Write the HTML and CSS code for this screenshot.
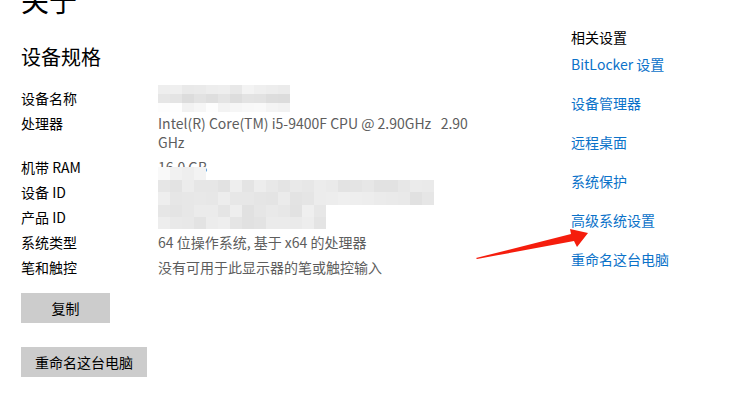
FILE: index.html
```html
<!DOCTYPE html>
<html lang="zh-CN">
<head>
  <meta charset="UTF-8">
  <meta name="viewport" content="width=device-width, initial-scale=1.0">
  <title>关于</title>
  <link rel="stylesheet" href="styles.css">
</head>
<body>
  <div class="page">
    <main class="about">
      <h1>关于</h1>
      <h2>设备规格</h2>
      <dl class="specs" id="specs">
        <div class="spec"><dt>设备名称</dt><dd></dd></div>
        <div class="spec"><dt>处理器</dt><dd>Intel(R) Core(TM) i5-9400F CPU @ 2.90GHz &nbsp; 2.90 GHz</dd></div>
        <div class="spec"><dt>机带 RAM</dt><dd>16.0 GB</dd></div>
        <div class="spec"><dt>设备 ID</dt><dd></dd></div>
        <div class="spec"><dt>产品 ID</dt><dd></dd></div>
        <div class="spec"><dt>系统类型</dt><dd>64 位操作系统, 基于 x64 的处理器</dd></div>
        <div class="spec"><dt>笔和触控</dt><dd>没有可用于此显示器的笔或触控输入</dd></div>
      </dl>
      <div class="actions">
        <button class="btn">复制</button>
        <button class="btn">重命名这台电脑</button>
      </div>
    </main>

    <aside class="related">
      <h3>相关设置</h3>
      <a href="#">BitLocker 设置</a>
      <a href="#">设备管理器</a>
      <a href="#">远程桌面</a>
      <a href="#">系统保护</a>
      <a href="#">高级系统设置</a>
      <a href="#">重命名这台电脑</a>
    </aside>

    <svg class="arrow" width="125" height="40" viewBox="0 0 125 40">
      <polygon points="6,33 101,9 100,4 118,8 107,22 104,16 7,34" fill="#f51d0d"/>
    </svg>
  </div>

  <script>
    // pixelated cover over private values
    const specs = document.getElementById('specs');
    const blocks = [
      { x: 137, y: -4, cols: 11, rows: [9, 9, 9] },
      { x: 137, y: 78, cols: 4, rows: [13] },
      { x: 137, y: 91, cols: 23, rows: [12, 13] },
      { x: 137, y: 116, cols: 14, rows: [12, 12] }
    ];
    let seed = 7;
    function rnd() {
      seed = (seed * 9301 + 49297) % 233280;
      return seed / 233280;
    }
    blocks.forEach((b, bi) => {
      const m = document.createElement('div');
      m.className = 'mosaic';
      m.style.left = b.x + 'px';
      m.style.top = b.y + 'px';
      b.rows.forEach((h, ri) => {
        const row = document.createElement('div');
        row.className = 'mosaic-row';
        row.style.height = h + 'px';
        for (let c = 0; c < b.cols; c++) {
          const t = document.createElement('span');
          let base = 232;
          if (bi === 0) base = [238, 226, 247][ri];
          if (bi === 1) base = 242;
          const g = Math.round(base + (rnd() - 0.5) * 14);
          t.style.background = `rgb(${g},${g},${g})`;
          row.appendChild(t);
        }
        m.appendChild(row);
      });
      specs.appendChild(m);
    });
  </script>
</body>
</html>
```

FILE: styles.css
```css
body {
  margin: 0;
  background: #fff;
  color: #000;
  font-family: "Noto Sans CJK SC", "Noto Sans", sans-serif;
  font-size: 14px;
  overflow: hidden;
}

.page {
  position: relative;
  display: flex;
  align-items: flex-start;
  padding-left: 21px;
}

.about {
  width: 550px;
}

h1 {
  margin: -18px 0 0;
  font-size: 28px;
  font-weight: normal;
  line-height: 36px;
}

h2 {
  margin: 25px 0 0;
  font-size: 20px;
  font-weight: normal;
  line-height: 28px;
}

.specs {
  position: relative;
  margin: 18px 0 0;
  display: flex;
  flex-direction: column;
  gap: 6px;
}

.spec {
  display: flex;
  line-height: 19px;
}

.spec dt {
  width: 137px;
  flex: none;
}

.spec dd {
  margin: 0;
  width: 310px;
  min-height: 19px;
  color: #5d5d5d;
}

.mosaic {
  position: absolute;
}

.mosaic-row {
  display: flex;
}

.mosaic-row span {
  width: 12px;
}

.actions {
  display: flex;
  flex-direction: column;
  align-items: flex-start;
  gap: 24px;
  margin-top: 16px;
}

.btn {
  min-width: 89px;
  height: 30px;
  padding: 0 14px;
  border: none;
  background: #cccccc;
  color: #000;
  font-family: inherit;
  font-size: 14px;
}

.related {
  display: flex;
  flex-direction: column;
  align-items: flex-start;
  gap: 19px;
  padding-top: 27px;
}

.related h3 {
  margin: 0 0 -12px;
  font-size: 14px;
  font-weight: normal;
  line-height: 20px;
}

.related a {
  color: #0b72c9;
  text-decoration: none;
  line-height: 20px;
}

.arrow {
  position: absolute;
  left: 470px;
  top: 225px;
}
```
